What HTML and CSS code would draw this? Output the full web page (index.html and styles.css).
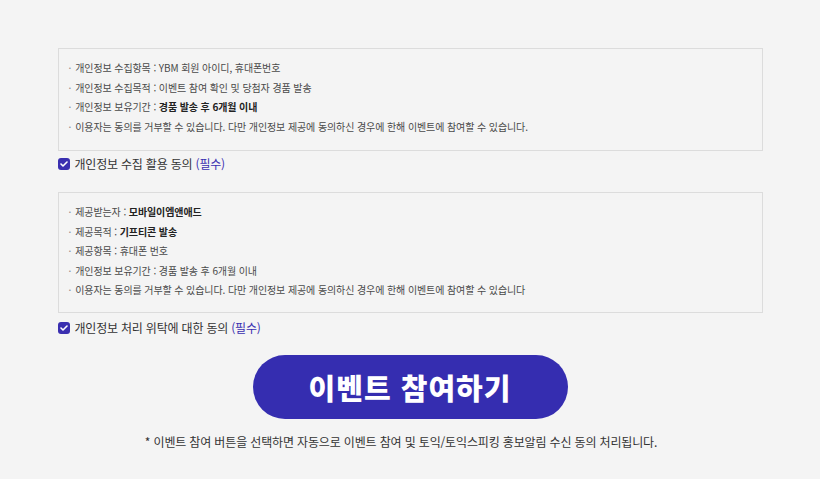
FILE: index.html
```html
<!DOCTYPE html>
<html lang="ko">
<head>
    <meta charset="UTF-8">
    <meta name="viewport" content="width=device-width, initial-scale=1.0">
    <title>이벤트 참여</title>
    <link rel="stylesheet" href="styles.css">
</head>
<body>
    <div class="agree-wrap">
        <div class="terms-box">
            <ul>
                <li>개인정보 수집항목 : YBM 회원 아이디, 휴대폰번호</li>
                <li>개인정보 수집목적 : 이벤트 참여 확인 및 당첨자 경품 발송</li>
                <li>개인정보 보유기간 : <strong>경품 발송 후 6개월 이내</strong></li>
                <li>이용자는 동의를 거부할 수 있습니다. 다만 개인정보 제공에 동의하신 경우에 한해 이벤트에 참여할 수 있습니다.</li>
            </ul>
        </div>
        <label class="check-row">
            <span class="check-box">
                <svg width="8" height="6" viewBox="0 0 8 6"><path d="M1 3l2 2 4-4" fill="none" stroke="#fff" stroke-width="1.6" stroke-linecap="round" stroke-linejoin="round"/></svg>
            </span>
            <span>개인정보 수집 활용 동의 <em>(필수)</em></span>
        </label>

        <div class="terms-box terms-box-2">
            <ul>
                <li>제공받는자 : <strong>모바일이엠앤애드</strong></li>
                <li>제공목적 : <strong>기프티콘 발송</strong></li>
                <li>제공항목 : 휴대폰 번호</li>
                <li>개인정보 보유기간 : 경품 발송 후 6개월 이내</li>
                <li>이용자는 동의를 거부할 수 있습니다. 다만 개인정보 제공에 동의하신 경우에 한해 이벤트에 참여할 수 있습니다</li>
            </ul>
        </div>
        <label class="check-row check-row-2">
            <span class="check-box">
                <svg width="8" height="6" viewBox="0 0 8 6"><path d="M1 3l2 2 4-4" fill="none" stroke="#fff" stroke-width="1.6" stroke-linecap="round" stroke-linejoin="round"/></svg>
            </span>
            <span>개인정보 처리 위탁에 대한 동의 <em>(필수)</em></span>
        </label>
    </div>

    <div class="btn-area">
        <button class="btn-join">이벤트 참여하기</button>
    </div>
    <p class="notice">* 이벤트 참여 버튼을 선택하면 자동으로 이벤트 참여 및 토익/토익스피킹 홍보알림 수신 동의 처리됩니다.</p>
</body>
</html>
```

FILE: styles.css
```css
body {
    margin: 0;
    padding: 48px 0 0;
    background-color: #f4f4f4;
    font-family: "Noto Sans CJK KR", "Noto Sans", sans-serif;
    color: #333;
}

.agree-wrap {
    width: 705px;
    margin: 0 auto;
}

.terms-box {
    border: 1px solid #dcdcdc;
    padding: 9px 10px 12px;
    height: 80px;
}

.terms-box-2 {
    height: 98px;
}

.terms-box ul {
    margin: 0;
    padding: 0;
    list-style: none;
}

.terms-box li {
    font-size: 10px;
    line-height: 19.5px;
    letter-spacing: -0.1px;
    color: #4a4a4a;
}

.terms-box li::before {
    content: "·";
    margin-right: 4px;
    color: #888;
}

.terms-box strong {
    color: #222;
    font-weight: 700;
}

.check-row {
    display: flex;
    align-items: center;
    gap: 5px;
    height: 13px;
    margin: 6px 0 22px;
    font-size: 12px;
    color: #333;
    letter-spacing: -0.2px;
}

.check-row-2 {
    margin-top: 8px;
}

.check-row em {
    font-style: normal;
    color: #3a2fb0;
}

.check-box {
    display: flex;
    align-items: center;
    justify-content: center;
    width: 12px;
    height: 12px;
    border-radius: 3px;
    background-color: #3a2fb0;
}

.btn-area {
    display: flex;
    justify-content: center;
    margin-top: -1px;
}

.btn-join {
    width: 315px;
    height: 64px;
    border: none;
    border-radius: 32px;
    background-color: #352db0;
    color: #fff;
    font-family: "Noto Sans CJK KR", sans-serif;
    font-size: 29px;
    font-weight: 900;
    letter-spacing: 1px;
    cursor: pointer;
}

.notice {
    margin: 14px 0 0;
    padding-right: 18px;
    text-align: center;
    font-size: 12px;
    color: #333;
    letter-spacing: -0.15px;
}
```
